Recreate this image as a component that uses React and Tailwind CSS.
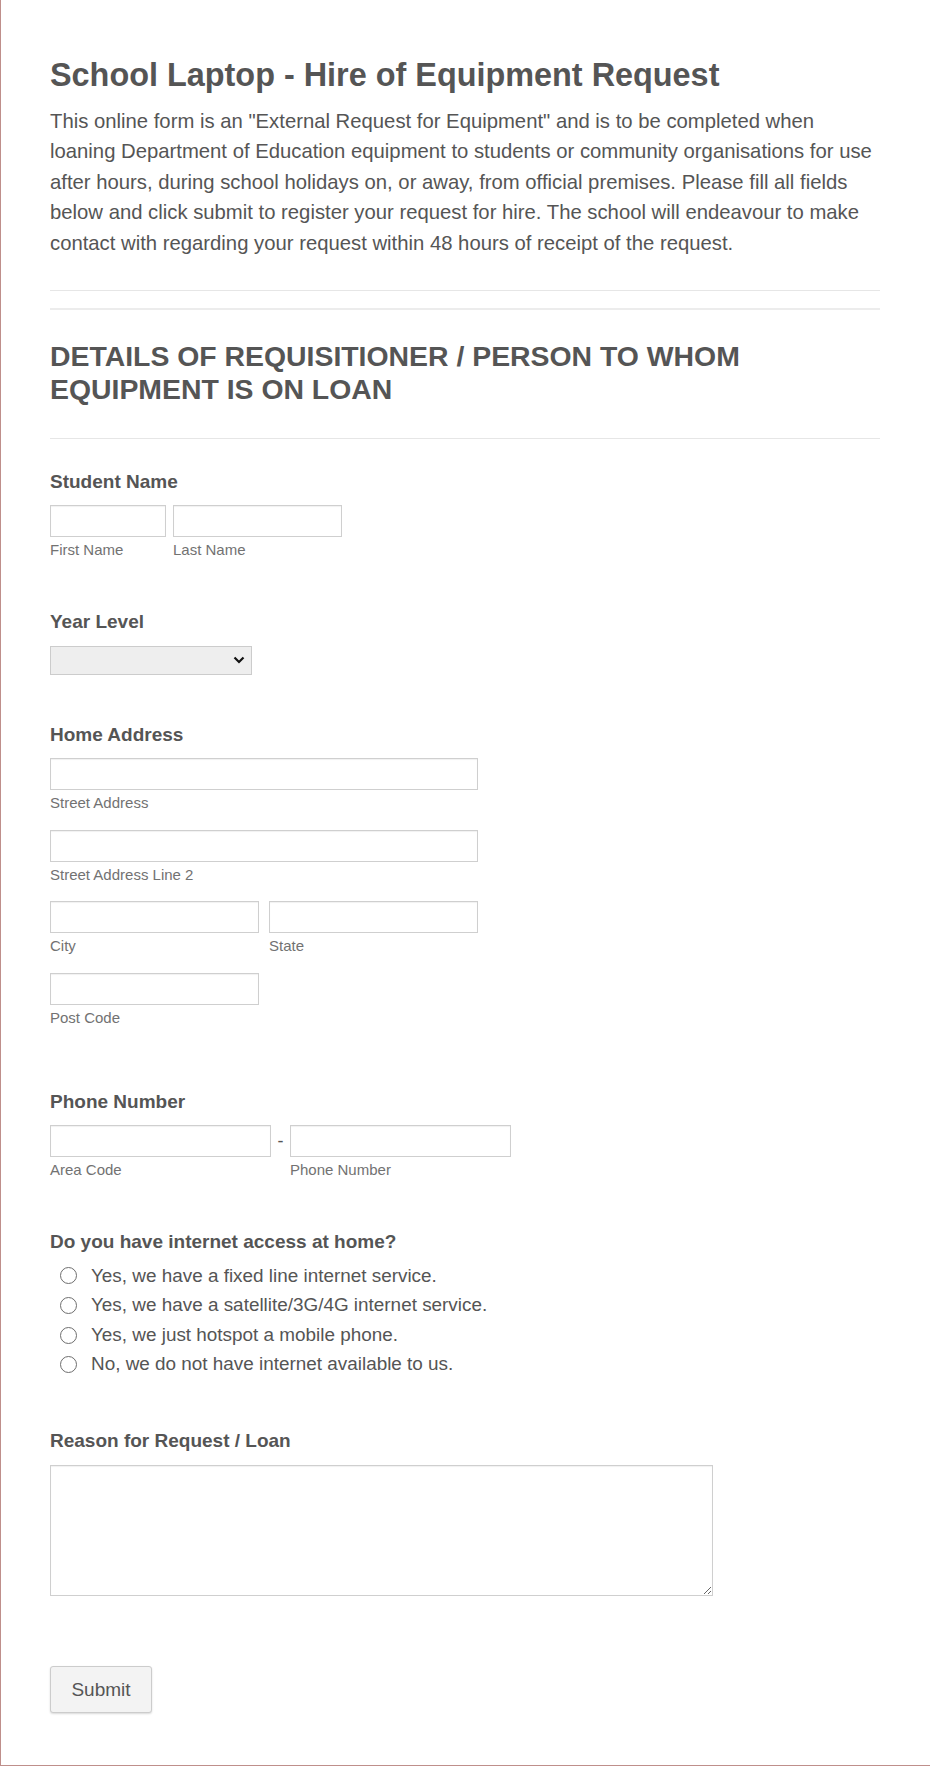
import React from "react";

const font = { fontFamily: '"Liberation Sans", Arial, sans-serif' };

function FieldLabel({ children, className = "" }) {
  return (
    <div className={`text-[19px] leading-[24px] font-bold text-[#555555] ${className}`}>
      {children}
    </div>
  );
}

function Sub({ children }) {
  return <div className="text-[15px] leading-[18px] text-[#727272] mt-[4px]">{children}</div>;
}

function TextInput({ className = "" }) {
  return (
    <input
      type="text"
      className={`block h-[32px] border border-[#cfcfcf] bg-white shadow-[inset_0_1px_1px_rgba(0,0,0,0.06)] outline-none ${className}`}
    />
  );
}

export default function App() {
  const options = [
    "Yes, we have a fixed line internet service.",
    "Yes, we have a satellite/3G/4G internet service.",
    "Yes, we just hotspot a mobile phone.",
    "No, we do not have internet available to us.",
  ];
  return (
    <div style={font} className="w-[930px] h-[1766px] bg-white border-l border-b border-[#bf8f8b] text-[#555555]">
      <div className="pl-[49px] pr-[50px] pt-[56px]">
        <h1 className="text-[32.4px] leading-[38px] font-bold text-[#555555]">
          School Laptop - Hire of Equipment Request
        </h1>
        <p className="mt-[12px] max-w-[826px] text-[20.3px] leading-[30.4px] text-[#555555]">
          This online form is an "External Request for Equipment" and is to be completed when loaning Department of
          Education equipment to students or community organisations for use after hours, during school holidays on, or
          away, from official premises. Please fill all fields below and click submit to register your request for
          hire. The school will endeavour to make contact with regarding your request within 48 hours of receipt of the
          request.
        </p>

        <div className="mt-[32px] h-px bg-[#e6e6e6]" />
        <div className="mt-[17px] h-[2px] bg-[#ececec]" />

        <h2 className="mt-[30px] text-[28.4px] leading-[33px] font-bold text-[#555555] uppercase">
          Details of Requisitioner / Person to whom
          <br />
          equipment is on loan
        </h2>

        <div className="mt-[32px] h-px bg-[#e6e6e6]" />

        {/* Student Name */}
        <FieldLabel className="mt-[31px]">Student Name</FieldLabel>
        <div className="mt-[11px] flex gap-[7px]">
          <div>
            <TextInput className="w-[116px]" />
            <Sub>First Name</Sub>
          </div>
          <div>
            <TextInput className="w-[169px]" />
            <Sub>Last Name</Sub>
          </div>
        </div>

        {/* Year Level */}
        <FieldLabel className="mt-[51px]">Year Level</FieldLabel>
        <div className="relative mt-[12px] w-[202px] h-[29px]">
          <select className="appearance-none w-full h-full border border-[#cccccc] bg-[#eeeeee] outline-none">
            <option></option>
          </select>
          <svg
            className="absolute right-[7px] top-[9px] pointer-events-none"
            width="12"
            height="10"
            viewBox="0 0 12 10"
          >
            <path d="M1.5 2.5 L6 7 L10.5 2.5" fill="none" stroke="#111" strokeWidth="2.2" />
          </svg>
        </div>

        {/* Home Address */}
        <FieldLabel className="mt-[48px]">Home Address</FieldLabel>
        <div className="mt-[11px] w-[428px]">
          <TextInput className="w-full" />
          <Sub>Street Address</Sub>
          <TextInput className="w-full mt-[18px]" />
          <Sub>Street Address Line 2</Sub>
          <div className="mt-[17px] grid grid-cols-2 gap-[10px]">
            <div>
              <TextInput className="w-full" />
              <Sub>City</Sub>
            </div>
            <div>
              <TextInput className="w-full" />
              <Sub>State</Sub>
            </div>
          </div>
          <div className="mt-[18px] w-[209px]">
            <TextInput className="w-full" />
            <Sub>Post Code</Sub>
          </div>
        </div>

        {/* Phone */}
        <FieldLabel className="mt-[63px]">Phone Number</FieldLabel>
        <div className="mt-[11px] flex items-start">
          <div>
            <TextInput className="w-[221px]" />
            <Sub>Area Code</Sub>
          </div>
          <div className="w-[19px] h-[32px] flex items-center justify-center text-[18px]">-</div>
          <div>
            <TextInput className="w-[221px]" />
            <Sub>Phone Number</Sub>
          </div>
        </div>

        {/* Internet */}
        <FieldLabel className="mt-[51px]">Do you have internet access at home?</FieldLabel>
        <div className="mt-[7px] flex flex-col">
          {options.map((o) => (
            <label key={o} className="flex items-center h-[29.6px] text-[18.9px] text-[#555555]">
              <span className="ml-[10px] w-[17px] h-[17px] rounded-full border border-[#6e6e6e] bg-white shrink-0" />
              <span className="ml-[14px]">{o}</span>
            </label>
          ))}
        </div>

        {/* Reason */}
        <FieldLabel className="mt-[50px]">Reason for Request / Loan</FieldLabel>
        <textarea className="block mt-[12px] w-[663px] h-[131px] border border-[#cfcfcf] bg-white shadow-[inset_0_1px_1px_rgba(0,0,0,0.06)] outline-none" />

        <button className="mt-[70px] w-[102px] h-[47px] rounded-[3px] border border-[#cccccc] bg-[#f3f3f3] text-[19px] text-[#555555] shadow-[0_1px_2px_rgba(0,0,0,0.15)]">
          Submit
        </button>
      </div>
    </div>
  );
}
